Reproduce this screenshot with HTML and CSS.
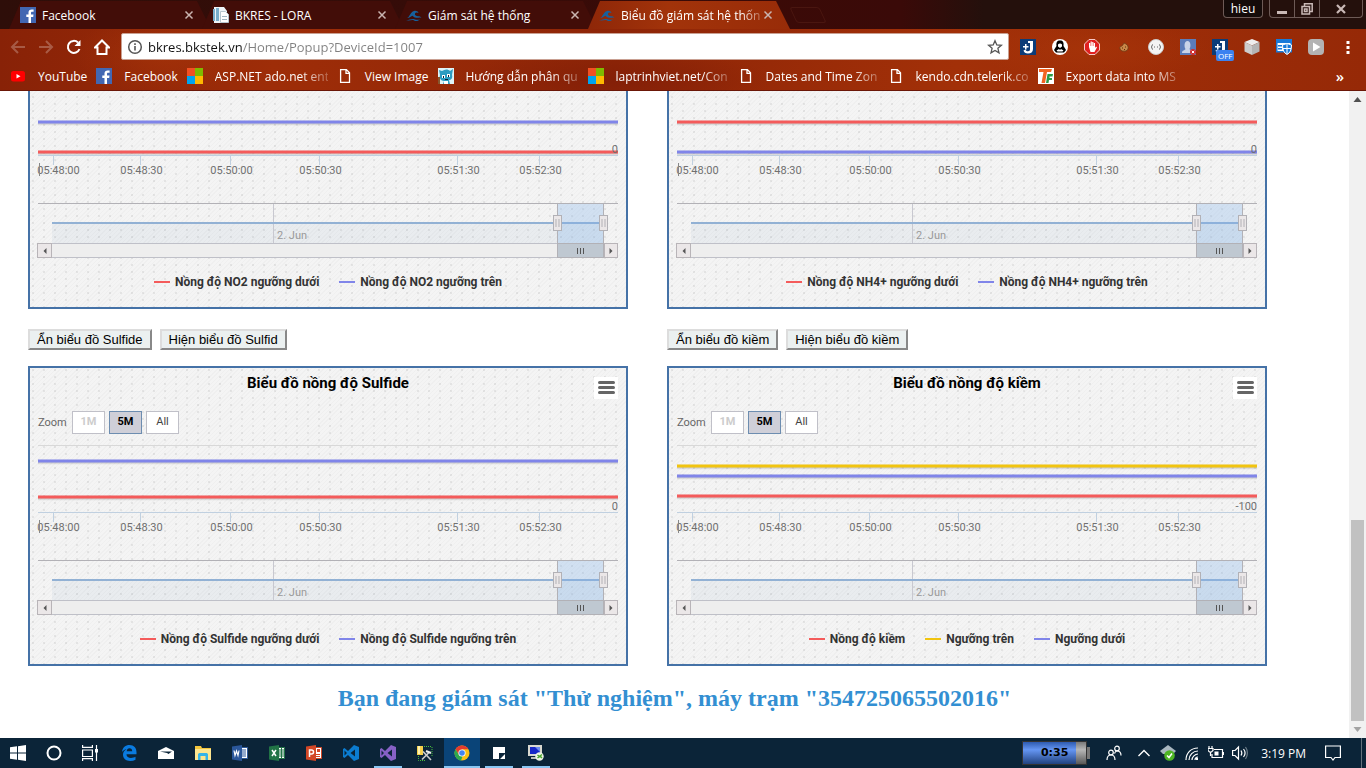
FILE: index.html
```html
<!DOCTYPE html>
<html lang="vi">
<head>
<meta charset="utf-8">
<title>Biểu đồ giám sát hệ thống</title>
<link rel="stylesheet" href="styles.css">
</head>
<body>
<svg class="defs" aria-hidden="true">
  <symbol id="i-fb" viewBox="0 0 16 16"><path fill="#4267b2" d="M0 0h16v16H0z"/><path fill="#fff" d="M11 16V10h2.200l.3-2.400H11V6c0-.8.300-1.200 1.200-1.200h1.400V2.500c-.4-.1-1.100-.1-1.900-.1-2 0-3.200 1.200-3.200 3.200v2H6.300V10h2.200v6z"/></symbol>
  <symbol id="i-wave" viewBox="0 0 16 16"><path fill="#17609c" d="M1 11c3-1 3-6 7-7 2-.5 4 .3 4.500 2-1.500-1-3-.7-3.500.5-.6 1.700 1.500 2.700 3 2.800 1.500.1 2.500.4 3.500 1.400-2-.6-3-.1-4.500.1C8 11.200 7.500 9 6.500 8.700 5 9 4 11 1 11zM0 13c3 .3 6-2 9-.6 2 .7 3.500.6 5-.2-1.500 1.800-4 2.200-6 1.200-2-1-5 .8-8-.4z"/></symbol>
  <symbol id="i-ms" viewBox="0 0 16 16"><path fill="#f25022" d="M0 0h8v8H0z"/><path fill="#7fba00" d="M8 0h8v8H8z"/><path fill="#00a4ef" d="M0 8h8v8H0z"/><path fill="#ffb900" d="M8 8h8v8H8z"/></symbol>
  <symbol id="i-doc" viewBox="0 0 16 16"><path fill="none" stroke="#fff" stroke-width="1.300" d="M3.600 1.600h5.800l3.100 3.200v9.600H3.600zM9 1.800V5.400h3.400"/></symbol>
  <symbol id="i-x" viewBox="0 0 10 10"><path stroke="#c9b4b0" stroke-width="1.500" d="M1.500 1.500l7 7M8.500 1.500l-7 7"/></symbol>
  <symbol id="i-j" viewBox="0 0 16 16"><path fill="#0c3c78" d="M0 0h16v16H0z"/><path fill="#fff" d="M8 2h5v8c0 3-2 4.500-5 4.500-2.500 0-4-1-4.500-3l2-1C6 12 7 12.300 8 12.300c1.500 0 2-.8 2-2V4H8z"/><path fill="#fff" d="M3 7h2V5h1.500v2h2v1.500h-2v2H5v-2H3z"/></symbol>
  <symbol id="i-burger" viewBox="0 0 24 22"><path stroke="#666" stroke-width="3" stroke-linecap="round" d="M5.500 5.500h14M5.500 10.500h14M5.500 15.500h14"/></symbol>
</svg>

<header class="browser">
  <div class="titlebar">
    <nav class="tabs" aria-label="Tabs">
      <a class="tab" href="#"><svg class="ico"><use href="#i-fb"/></svg><span class="tab-text">Facebook</span><svg class="close"><use href="#i-x"/></svg></a>
      <a class="tab" href="#"><svg class="ico" viewBox="0 0 16 16"><path fill="#eef4f8" d="M1 0h10l3 4v12H1z"/><path fill="#79aecb" d="M0 2h2v12H0zM3 1h3v13H3z"/><path fill="#fff" stroke="#b8c6cf" d="M7.500 4.500h5l3 3v8h-8z"/><path stroke="#9fb4c0" d="M9 9.500h5M9 12.500h5"/></svg><span class="tab-text">BKRES - LORA</span><svg class="close"><use href="#i-x"/></svg></a>
      <a class="tab" href="#"><svg class="ico"><use href="#i-wave"/></svg><span class="tab-text">Giám sát hệ thống</span><svg class="close"><use href="#i-x"/></svg></a>
      <a class="tab active" href="#"><svg class="ico"><use href="#i-wave"/></svg><span class="tab-text fade">Biểu đồ giám sát hệ thốn</span><svg class="close"><use href="#i-x"/></svg></a>
    </nav>
    <button class="newtab" aria-label="New tab"></button>
    <div class="win">
      <button class="user">hieu</button>
      <div class="winbtns">
        <button class="wb" aria-label="Minimize"><svg width="12" height="12"><path fill="#c9b9b6" d="M1 8h10v3H1z"/></svg></button>
        <button class="wb" aria-label="Restore"><svg width="12" height="12"><path fill="none" stroke="#c9b9b6" stroke-width="1.500" d="M3.500 3V.8h7.700v7.700H9M1 3.500h7.500V11H1zM3.500 6h2.500v2.500H3.500z"/></svg></button>
        <button class="wb wide" aria-label="Close"><svg width="12" height="12"><path stroke="#c9b9b6" stroke-width="2.200" d="M2 2l8 8M10 2l-8 8"/></svg></button>
      </div>
    </div>
  </div>
  <div class="toolbar">
    <button class="nav dim" aria-label="Back"><svg viewBox="0 0 16 16"><path d="M15 8H2M8 2L2 8l6 6"/></svg></button>
    <button class="nav dim" aria-label="Forward"><svg viewBox="0 0 16 16"><path d="M1 8h13M8 2l6 6-6 6"/></svg></button>
    <button class="nav" aria-label="Reload"><svg viewBox="0 0 16 16"><path d="M13.500 10A6 6 0 1 1 12 3.500"/><path class="solid" d="M14.500 1v6h-6z"/></svg></button>
    <button class="nav" aria-label="Home"><svg viewBox="0 0 16 16"><path d="M1 8.500L8 1.500l7 7h-2.500V15h-9V8.500z"/></svg></button>
    <div class="omnibox">
      <svg class="ico" viewBox="0 0 16 16"><circle cx="8" cy="8" r="6.300" fill="none" stroke="#555" stroke-width="1.500"/><path fill="#555" d="M7.200 7h1.600v4.500H7.200zM7.200 4.300h1.600v1.600H7.200z"/></svg>
      <input class="url" aria-label="Address" value="bkres.bkstek.vn/Home/Popup?DeviceId=1007">
      <svg class="ico" viewBox="0 0 16 16"><path fill="none" stroke="#555" stroke-width="1.300" d="M8 1.700l1.800 4.200 4.600.4-3.500 3 1.100 4.500L8 11.400l-4 2.400 1.100-4.500-3.500-3 4.600-.4z"/></svg>
    </div>
    <div class="exts">
      <button class="ext" aria-label="J"><svg><use href="#i-j"/></svg></button>
      <button class="ext" aria-label="Profile"><svg viewBox="0 0 16 16"><circle cx="8" cy="8" r="8" fill="#fff"/><path d="M8 1.500c3 0 4 2 3.500 5.500l2.500 4-2 2.500H4L2 11l2.500-4C4 3.500 5 1.500 8 1.500z"/><path fill="#fff" d="M6 5.500c1-1.500 3-1.500 4 0v2L8 9 6 7.500zM4.500 11.500L7 10l1 1 1-1 2.500 1.500-1 1h-5z"/></svg></button>
      <button class="ext" aria-label="AdBlock"><svg viewBox="0 0 16 16"><path fill="#e02020" stroke="#f6c9c9" d="M5 .500h6L15.500 5v6L11 15.500H5L.5 11V5z"/><path fill="#fff" d="M5 8V4h1.200v3h.4V2.600h1.200V7h.4V3h1.200v4h.4V4H11v5l1-1.400 1 .7L10.500 13H6.500z"/></svg></button>
      <button class="ext" aria-label="Cookie"><svg viewBox="0 0 16 16"><path fill="#c98748" stroke="#6c3b18" stroke-width=".8" d="M8 4c2 1 4.200 2 4.200 4.500a4.200 3.700 0 0 1-8.400 0c0-1 1-1 2-1.500s1.200-1.500 2.200-3z"/><path stroke="#5a2c0c" d="M6 9h1M9 8h1M8 10.500h1"/></svg></button>
      <button class="ext" aria-label="JSON"><svg viewBox="0 0 16 16"><circle cx="8" cy="8" r="7.500" fill="#f4f4f4" stroke="#ccc"/><path fill="none" stroke="#666" d="M5 5.500c-1.500 0-.5 2.500-2 2.500 1.500 0 .5 2.500 2 2.500M11 5.500c1.500 0 .5 2.500 2 2.500-1.500 0-.5 2.500-2 2.500M6 8h1M9 8h1"/></svg></button>
      <button class="ext" aria-label="Friends"><svg viewBox="0 0 16 16"><path fill="#5b7cba" d="M0 0h16v16H0z"/><path fill="#c9d3e8" d="M2 14c0-3 3-2.500 3.500-4C4 8 4 2 7.500 2S11 8 9.500 10c.5 1.500 3.500 1 3.500 4z"/><circle cx="13" cy="13" r="3" fill="#d22b2b"/><path stroke="#fff" d="M11.800 11.800l2.400 2.400M14.200 11.800l-2.400 2.400"/></svg></button>
      <button class="ext" aria-label="J off"><svg><use href="#i-j"/></svg><span class="badge">OFF</span></button>
      <button class="ext" aria-label="Cube"><svg viewBox="0 0 16 16"><path fill="#eee" d="M8 0l7.500 3L8 6.500.5 3z"/><path fill="#ccc" d="M.5 3L8 6.500V16L.5 12.500z"/><path fill="#b4b4b4" d="M15.500 3L8 6.500V16l7.500-3.500z"/></svg></button>
      <button class="ext" aria-label="Shield"><svg viewBox="0 0 16 16"><path fill="#fff" stroke="#1a7ad9" stroke-width="1.500" d="M.8.8h14.400v12H.8z"/><path fill="#1a7ad9" d="M0 0h16v4H0zM2 6h5v1.500H2zM2 9h4v1.500H2z"/><path fill="#1a7ad9" stroke="#fff" d="M11 4.500l4.500 1.500c0 5-1.500 8-4.500 9.500-3-1.500-4.500-4.500-4.500-9.500z"/><path stroke="#fff" d="M11 5v10M7 9.500h8"/></svg></button>
      <button class="ext" aria-label="Play"><svg viewBox="0 0 16 16"><rect width="16" height="16" rx="4" fill="#b3b3b3"/><path fill="#fff" d="M5 3.500l7.500 4.500L5 12.500z"/></svg></button>
    </div>
    <button class="menu3" aria-label="Menu"><svg width="4" height="14"><path fill="#fff" d="M.5 1h3v3h-3zM.5 6h3v3h-3zM.5 11h3v3h-3z"/></svg></button>
  </div>
  <nav class="bookmarks" aria-label="Bookmarks">
    <a class="bm" href="#"><svg class="ico" viewBox="0 0 16 16"><rect x="1" y="3" width="14" height="10.500" rx="2.500" fill="#f00"/><path fill="#fff" d="M6.500 6v4.500l4-2.200z"/></svg><span>YouTube</span></a>
    <a class="bm" href="#"><svg class="ico"><use href="#i-fb"/></svg><span>Facebook</span></a>
    <a class="bm" href="#"><svg class="ico"><use href="#i-ms"/></svg><span class="long">ASP.NET ado.net ent</span></a>
    <a class="bm" href="#"><svg class="ico"><use href="#i-doc"/></svg><span>View Image</span></a>
    <a class="bm" href="#"><svg class="ico" viewBox="0 0 16 16"><path fill="#dff3f7" d="M0 0h16v16H0z"/><path fill="#2e9cc0" d="M1 2l3 1c3-2 6-2 8 0l3-2-1 6c1 3-1 5-3 5l1 4H5l1-3C3 13 1 10 2 7z"/><path fill="#fff" d="M4 7h3v3H4zM9 6h3v3H9zM6 13h4v3H6z"/><path fill="#123" d="M5 8h1v2H5zM10 7h1v2h-1zM7 11h3v1H7z"/><path fill="#86572f" d="M0 9h2v7H0z"/></svg><span class="long">Hướng dẫn phân qu</span></a>
    <a class="bm" href="#"><svg class="ico"><use href="#i-ms"/></svg><span class="long">laptrinhviet.net/Con</span></a>
    <a class="bm" href="#"><svg class="ico"><use href="#i-doc"/></svg><span class="long">Dates and Time Zon</span></a>
    <a class="bm" href="#"><svg class="ico"><use href="#i-doc"/></svg><span class="long">kendo.cdn.telerik.co</span></a>
    <a class="bm" href="#"><svg class="ico" viewBox="0 0 16 16"><path fill="#fff" d="M0 0h16v16H0z"/><path fill="#f26522" d="M1 1h13l-1 3H9L7 15H3.500l2-11H1z"/><path fill="#2b9b46" d="M9.500 6H15l-.5 2.500H11.500V10h2.500v2h-3l-.5 3H8z"/></svg><span class="long">Export data into MS</span></a>
    <button class="more" aria-label="More bookmarks">»</button>
  </nav>
</header>

<div class="viewport">
  <main class="page">
    <div class="grid">
      <section class="chart" data-chart="no2"></section>
      <section class="chart" data-chart="nh4"></section>
      <div class="actions"><button>Ẩn biểu đồ Sulfide</button><button>Hiện biểu đồ Sulfid</button></div>
      <div class="actions"><button>Ẩn biểu đồ kiềm</button><button>Hiện biểu đồ kiềm</button></div>
      <section class="chart" data-chart="sulfide"></section>
      <section class="chart" data-chart="alkali"></section>
    </div>
    <h1 class="station">Bạn đang giám sát "Thử nghiệm", máy trạm "354725065502016"</h1>
  </main>
  <div class="scroll" aria-hidden="true">
    <svg viewBox="0 0 17 17"><path fill="#505050" d="M8.500 6l4 5h-8z"/></svg>
    <i></i>
    <i class="thumb"></i>
    <svg viewBox="0 0 17 17"><path fill="#a3a3a3" d="M8.500 11l4-5h-8z"/></svg>
  </div>
</div>

<footer class="taskbar">
  <div class="apps">
    <button class="app" aria-label="Start"><svg viewBox="0 0 16 16"><path fill="#fff" d="M0 2.300L7 1.300v6.300H0zM8 1.200L16 0v7.600H8zM0 8.400h7v6.400l-7-1zM8 8.400h8V16l-8-1.200z"/></svg></button>
    <button class="app" aria-label="Cortana"><svg viewBox="0 0 16 16"><circle cx="8" cy="8" r="6.500" fill="none" stroke="#fff" stroke-width="2"/></svg></button>
    <button class="app last" aria-label="Task view"><svg viewBox="0 0 16 16"><path fill="none" stroke="#fff" stroke-width="1.200" d="M.6 0v2.400h9.800V0M.6 5h9.800v6.500H.6zM.6 16v-2.300h9.800V16M14.500 0v16"/><path fill="#fff" d="M13 4h3v3.500h-3z"/></svg></button>
    <button class="app" aria-label="Edge"><svg viewBox="0 0 16 16"><path fill="#0a7be0" d="M1 7C1.500 2.500 4.500 0 8.500 0 13 0 15.500 3 15.500 7.200v2H5.500c0 2.500 2 3.800 4.500 3.800 1.800 0 3.300-.5 4.500-1.200v3c-1.500.8-3.200 1.200-5.200 1.200C4.800 16 2 13.500 2 9.800c0-2.500 1.300-4.500 3.500-5.600C3.500 4.500 2 5.500 1 7zm4.700-.7h5.500C11.200 4.500 10.300 3.300 8.500 3.300S6 4.500 5.700 6.300z"/></svg></button>
    <button class="app" aria-label="Mail"><svg viewBox="0 0 16 16"><path fill="#fff" d="M0 6l8-4 8 4v8H0z"/><path fill="#0b2438" d="M2 6.500h12L10.500 9 9 8z"/></svg></button>
    <button class="app" aria-label="Explorer"><svg viewBox="0 0 16 16"><path fill="#f4c63d" d="M0 1h6l1 2h9v11H0z"/><path fill="#fde58f" d="M0 4h16v11H0z"/><path fill="#35b4e8" d="M3 15V9.500C3 8.500 4 8 5 8h6c1 0 2 .5 2 1.500V15h-2.500v-4h-5v4z"/></svg></button>
    <button class="app" aria-label="Word"><svg viewBox="0 0 16 16"><path fill="#fff" stroke="#2b579a" d="M8 2.500h7.500v11H8z"/><path stroke="#2b579a" d="M10 5h4M10 7h4M10 9h4M10 11h4"/><path fill="#2b579a" d="M0 1.500L10 0v16L0 14.500z"/><path fill="none" stroke="#fff" stroke-width="1.200" d="M2 5.500l1 5 1.500-4.500L6 10.500l1-5"/></svg></button>
    <button class="app" aria-label="Excel"><svg viewBox="0 0 16 16"><path fill="#fff" stroke="#217346" d="M8 2.500h7.500v11H8z"/><path stroke="#217346" d="M10 5h5M10 7h5M10 9h5M10 11h5M12.500 3v10"/><path fill="#217346" d="M0 1.500L10 0v16L0 14.500z"/><path stroke="#fff" stroke-width="1.500" d="M3 5l4 6M7 5l-4 6"/></svg></button>
    <button class="app" aria-label="PowerPoint"><svg viewBox="0 0 16 16"><path fill="#fff" stroke="#d24726" d="M8 2.500h7.500v11H8z"/><path fill="#d24726" d="M11 4h3v3h-3zM10 9h4v1h-4zM10 11h4v1h-4z"/><path fill="#d24726" d="M0 1.500L10 0v16L0 14.500z"/><path fill="none" stroke="#fff" stroke-width="1.500" d="M3.500 12V5H5.500a2 2 0 0 1 0 4H3.500"/></svg></button>
    <button class="app" aria-label="VS Code"><svg viewBox="0 0 16 16"><path fill="#0b7cd0" d="M11 0l5 2v12l-5 2-6-6-3.500 3L0 12V4l1.500-1L5 6zM12 4.500L7.500 8l4.500 3.500zM1.500 5.500v5L4 8z" fill-rule="evenodd"/></svg></button>
    <button class="app open" aria-label="Visual Studio"><svg viewBox="0 0 16 16"><path fill="#8661c5" d="M11 0l5 2v12l-5 2-6-6-3.500 3L0 12V4l1.500-1L5 6zM12 4.500L7.500 8l4.500 3.500zM1.500 5.500v5L4 8z" fill-rule="evenodd"/></svg></button>
    <button class="app" aria-label="SQL Server"><svg viewBox="0 0 16 16"><path fill="#f5cf4c" d="M0 1h6v9H0z"/><path fill="#fff3b0" d="M1 1h2v8H1z"/><path fill="none" stroke="#49b93c" stroke-dasharray="1 1" d="M7 1.500h8M15 2v10M1.500 11v4.500H8"/><path stroke="#ccc" stroke-width="1.600" d="M5 14.500l7-7M6 6.500l8 8.500"/><path stroke="#eee" stroke-width="2" d="M9 6l5 2"/></svg></button>
    <button class="app open current" aria-label="Chrome"><svg viewBox="0 0 16 16"><circle cx="8" cy="8" r="7.500" fill="#fbc116"/><path fill="#e33b2e" d="M1.500 4.300A7.500 7.500 0 0 1 14.500 4.300H8L5 10z"/><path fill="#2da94f" d="M1.500 4.300L5 10l3.500 1.500-1.500 4A7.500 7.500 0 0 1 1.500 4.300z"/><circle cx="8" cy="8" r="3.600" fill="#fff"/><circle cx="8" cy="8" r="2.800" fill="#4285f4"/></svg></button>
    <button class="app open" aria-label="Notes"><svg viewBox="0 0 16 16"><path fill="#fff" d="M2 2h12v6H8v6H2zM14 9v5H9z"/></svg></button>
    <button class="app open" aria-label="Remote"><svg viewBox="0 0 16 16"><path fill="#d8d8d0" d="M0 0h14v11H0z"/><path fill="#1727c8" d="M2 2h10v7H2z"/><path fill="#6b8df0" d="M7 2h5v5z"/><path fill="#bbb" d="M3 12h7v2H3z"/><circle cx="11.500" cy="11.500" r="4.200" fill="#eef4e6"/><path stroke="#4ba82e" stroke-width="1.500" fill="none" d="M9.500 10l2 1.500-2 1.500M14 9.500L12 11l2 2"/></svg></button>
  </div>
  <div class="tray">
    <div class="power"><span>0:35</span></div>
    <svg class="people" viewBox="0 0 16 16"><g fill="none" stroke="#fff" stroke-width="1.200"><circle cx="5" cy="7.500" r="2.300"/><path d="M1 15c0-3 1.500-5 4-5s4 2 4 5"/><circle cx="11" cy="3.500" r="2.300"/><path d="M8.500 8.500c.5-1.500 1.300-2.500 2.500-2.500 2.500 0 4 2 4 4.500"/></g></svg>
    <svg class="t" viewBox="0 0 16 16"><path fill="none" stroke="#fff" stroke-width="1.400" d="M2.500 11L8 5.500l5.500 5.500"/></svg>
    <svg class="t" viewBox="0 0 16 16"><path fill="#a9b7c0" d="M8 0l8 6-3 3H3L0 6z"/><circle cx="9.500" cy="10.500" r="5.300" fill="#4db523"/><path fill="none" stroke="#fff" stroke-width="1.500" d="M7 10.500l2 2 3-4"/></svg>
    <svg class="t" viewBox="0 0 16 16"><g fill="none" stroke="#fff" stroke-width="1.200"><path d="M2 15C2 8 7 3 14 3M5 15c0-5 4-9 9-9M8 15c0-3 3-6 6-6M11 15c0-2 1-3 3-3"/></g><path fill="#fff" d="M12 13h2v2h-2z"/></svg>
    <svg class="t" viewBox="0 0 16 16"><path fill="none" stroke="#fff" stroke-width="1.200" d="M6 4.500h8.500v8H4V9M1 1v2M4 1v2M0 3.500h5v2L3.500 7h-2L0 5.500zM2.500 7v4"/><path fill="#fff" d="M6.500 6.500h4v4h-4zM15 7h1v3h-1z"/></svg>
    <svg class="t" viewBox="0 0 16 16"><g fill="none" stroke="#fff" stroke-width="1.200"><path d="M.6 5.500h2.500L6.500 2v12L3 10.500H.6zM9 5.500c1 1.500 1 3.500 0 5M11.500 4c2 2.500 2 5.500 0 8"/><path stroke="#6f7f8a" d="M13.500 2c2.500 3.500 2.500 8.500 0 12"/></g></svg>
    <time class="clock">3:19 PM</time>
    <button class="notif" aria-label="Notifications"><svg viewBox="0 0 16 16"><path fill="none" stroke="#fff" stroke-width="1.200" d="M.6 1h14.800v11.500H10L8 15l-2-2.500H.6z"/></svg></button>
    <i class="peek"></i>
  </div>
</footer>
<script src="charts.js"></script>
</body>
</html>
```
FILE: styles.css
```css
* { box-sizing: border-box; }
body {
  margin: 0;
  height: 100vh;
  display: flex;
  flex-direction: column;
  overflow: hidden;
  background: #fff;
  font-family: "Open Sans", "Noto Sans", sans-serif;
  font-size: 12px;
}
button { font: inherit; color: inherit; padding: 0; border: 0; background: none; }
a { color: inherit; text-decoration: none; }
svg { display: block; flex: none; }
.defs { display: none; }
.ico { width: 16px; height: 16px; }

/* browser frame */
.browser {
  flex: none;
  color: #fff;
  border-bottom: 1px solid #6b1708;
  background:
    radial-gradient(ellipse 90px 40px at 12% 60%, #ab370a88, transparent),
    radial-gradient(ellipse 160px 30px at 45% 90%, #7d1c0799, transparent),
    radial-gradient(ellipse 120px 30px at 80% 55%, #ab370a88, transparent),
    linear-gradient(90deg, #882207, #9e2d08 20%, #8e2507 45%, #a23008 70%, #962907);
}
.titlebar {
  display: flex;
  align-items: flex-end;
  height: 29px;
  padding-left: 9px;
  background: linear-gradient(90deg, #2e0e09, #3b0a07 55%, #3a0a08 66%, #24100c 72%, #24100c);
}
.tabs { display: flex; }
.tab {
  display: flex;
  align-items: center;
  width: 202px;
  height: 28px;
  margin-right: -9px;
  padding: 0 17px 0 11px;
  background: #420d08;
  clip-path: polygon(0 100%, 12px 0, 188px 0, 100% 100%);
}
.tab.active { background: linear-gradient(90deg, #8e2708, #a2330a 40%, #982c08); }
.tab-text {
  flex: 1;
  margin: 0 2px 0 6px;
  white-space: nowrap;
}
.fade { -webkit-mask-image: linear-gradient(90deg, #000 85%, #0004); mask-image: linear-gradient(90deg, #000 85%, #0004); }
.close { width: 10px; height: 10px; }
.newtab {
  width: 30px;
  height: 16px;
  margin: 0 0 6px 12px;
  border: 1px solid #4a1610;
  border-radius: 3px;
  transform: skewX(25deg);
}
.win { display: flex; align-self: flex-start; margin-left: auto; padding-right: 3px; gap: 6px; }
.user, .winbtns { height: 18px; border: 1px solid #6d5a56; border-top: 0; border-radius: 0 0 4px 4px; }
.user { width: 40px; background: #150b09; line-height: 16px; }
.winbtns { display: flex; }
.wb { display: grid; place-items: center; width: 25px; border-right: 1px solid #6d5a56; }
.wb.wide { width: 42px; border: 0; }

.toolbar { display: flex; align-items: center; height: 35px; padding-left: 4px; }
.nav { display: grid; place-items: center; width: 28px; height: 28px; }
.nav svg { width: 16px; height: 16px; fill: none; stroke: #fff; stroke-width: 2; }
.nav .solid { fill: #fff; stroke: none; }
.dim { opacity: .25; }
.omnibox {
  flex: 1;
  display: flex;
  align-items: center;
  height: 27px;
  margin-left: 5px;
  padding: 0 5px;
  background: #fff;
  border: 1px solid #c9a092;
  border-radius: 2px;
}
.url {
  flex: 1;
  min-width: 0;
  height: 24px;
  margin-left: 5px;
  padding: 0;
  border: 0;
  outline: 0;
  font: 13px "Open Sans", sans-serif;
  color: transparent;
  background: linear-gradient(90deg, #111 94px, #808080 94px);
  -webkit-background-clip: text;
  background-clip: text;
}
.exts { display: flex; margin-left: 3px; }
.ext { position: relative; display: grid; place-items: center; width: 32px; height: 28px; }
.ext svg { width: 16px; height: 16px; }
.badge {
  position: absolute;
  left: 12px;
  bottom: 0;
  padding: 0 2px;
  background: #3b82f0;
  border-radius: 2px;
  font-size: 8px;
  line-height: 11px;
}
.menu3 { display: grid; place-items: center; width: 32px; height: 28px; margin-right: 2px; }

.bookmarks { display: flex; align-items: center; gap: 9px; height: 26px; padding: 0 22px 2px 10px; }
.bm { display: flex; align-items: center; gap: 12px; white-space: nowrap; }
.long {
  width: 113px;
  -webkit-mask-image: linear-gradient(90deg, #000 75%, #0004);
  mask-image: linear-gradient(90deg, #000 75%, #0004);
}
.more { margin-left: auto; font-size: 15px; font-weight: 600; line-height: 16px; }

/* page */
.viewport { flex: 1; min-height: 0; display: flex; }
.page {
  flex: 1;
  min-width: 0;
  display: flex;
  flex-direction: column;
  justify-content: flex-end;
  overflow: hidden;
}
.grid {
  flex: none;
  display: grid;
  grid-template-columns: 1fr 1fr;
  column-gap: 39px;
  padding: 0 82px 0 28px;
}
.actions { display: flex; gap: 8px; padding: 20px 0 16px; }
.actions button {
  height: 21px;
  padding: 0 7px;
  border: 2px solid #ddd;
  border-color: #ddd #888 #888 #ddd;
  background: #ebf0f0;
  color: #000;
  font: 13px "Liberation Sans", sans-serif;
}
.station {
  flex: none;
  margin: 0;
  padding: 16px 0 24px;
  color: #338fd2;
  font: bold 24px/32px "Liberation Serif", serif;
  text-align: center;
}
.scroll {
  display: grid;
  grid-template-rows: 17px 412fr 201fr 17px;
  width: 17px;
  background: #f1f1f1;
}
.thumb { margin: 0 2px; background: #c1c1c1; }

/* charts */
.chart {
  height: 300px;
  display: flex;
  flex-direction: column;
  justify-content: flex-end;
  padding: 0 8px;
  border: 2px solid #4572a7;
  font-family: Roboto, sans-serif;
  background:
    radial-gradient(circle at 3px 2px, #00000012 0 1px, #0000 1px) 0 0 / 11px 7px,
    repeating-linear-gradient(-45deg, #0000 0 2px, #00000005 2px 3px),
    #f4f4f4;
}
.chart-head { display: grid; grid-template-columns: 1fr auto 1fr; height: 43px; }
.chart-head h2 { grid-column: 2; margin: 0; font-size: 15px; line-height: 30px; color: #000; }
.burger { justify-self: end; width: 24px; height: 22px; margin-top: 9px; background: #fff; }
.burger svg { width: 24px; height: 22px; }
.zoom { display: flex; align-items: center; gap: 4px; height: 23px; color: #666; font-size: 11px; }
.zoom span { width: 30px; }
.zoom button {
  width: 33px;
  height: 23px;
  padding-bottom: 2px;
  border: 1px solid #c0c0c8;
  background: #fff;
  color: #444;
}
.zoom button:disabled { color: #ccc; font-weight: 700; }
.zoom .on { background: #cfcfd8; border-color: #6d8db0; color: #000; font-weight: 700; }
.plot { width: 100%; height: 182px; overflow: visible; font-size: 11px; fill: #707070; }
.plot .jun { fill: #999; }
.mid { text-anchor: middle; }
.end { text-anchor: end; }
.legend {
  height: 48px;
  display: flex;
  justify-content: center;
  align-items: center;
  gap: 20px;
  margin: 0;
  padding: 0 0 2px;
  list-style: none;
  color: #333;
  font-size: 12px;
  font-weight: 700;
  white-space: nowrap;
}
.legend li { display: flex; align-items: center; gap: 5px; }
.legend i { width: 16px; height: 2px; }

/* taskbar */
.taskbar {
  flex: none;
  display: flex;
  justify-content: space-between;
  height: 30px;
  background: #0b2438;
  color: #fff;
}
.apps { display: flex; }
.app { display: grid; place-items: center; width: 36px; height: 30px; margin-right: 1px; }
.app:nth-child(-n+2) { margin-right: 0; }
.app.last { margin-right: 3px; }
.app svg { width: 16px; height: 16px; }
.open { background: linear-gradient(#8ac6f2, #8ac6f2) center bottom / 28px 2px no-repeat; }
.current { background: linear-gradient(#8ac6f2, #8ac6f2) center bottom / 36px 2px no-repeat #0a4478; }
.tray { display: flex; align-items: center; gap: 8px; }
.t { width: 16px; height: 16px; }
.people { width: 16px; height: 16px; margin: 0 6px 0 11px; }
.power {
  position: relative;
  width: 65px;
  height: 24px;
  border: 1px solid #333;
  background:
    linear-gradient(#0004, #fff3 35%, #0007),
    linear-gradient(90deg, #3f7cf0 53px, #a5a5a5 53px);
  color: #000;
  font: bold 11px/22px "DejaVu Sans", sans-serif;
  text-align: center;
}
.power::after {
  content: "";
  position: absolute;
  left: 64px;
  top: 5px;
  width: 3px;
  height: 12px;
  background: #777;
}
.clock { margin: 0 11px 0 5px; white-space: nowrap; }
.notif svg { width: 16px; height: 16px; }
.peek { width: 5px; height: 30px; margin-left: 12px; border-left: 1px solid #63727d; }
```
FILE: charts.js
```js
const RED = '#f45b5b', BLUE = '#8085e9', YELLOW = '#f1c40f';
const charts = {
  no2: { min: '0',
    series: [['Nồng độ NO2 ngưỡng dưới', RED, 75], ['Nồng độ NO2 ngưỡng trên', BLUE, 45]] },
  nh4: { min: '0',
    series: [['Nồng độ NH4+ ngưỡng dưới', RED, 45], ['Nồng độ NH4+ ngưỡng trên', BLUE, 75]] },
  sulfide: { title: 'Biểu đồ nồng độ Sulfide', min: '0',
    series: [['Nồng độ Sulfide ngưỡng dưới', RED, 63], ['Nồng độ Sulfide ngưỡng trên', BLUE, 27]] },
  alkali: { title: 'Biểu đồ nồng độ kiềm', min: '-100',
    series: [['Nồng độ kiềm', RED, 62], ['Ngưỡng trên', YELLOW, 32], ['Ngưỡng dưới', BLUE, 42]] }
};
const ticks = [[15.5, '05:48:00'], [102.5, '05:48:30'], [192.5, '05:50:00'],
  [281.5, '05:50:30'], [419.5, '05:51:30'], [501.5, '05:52:30']];

const pct = x => (x / 580 * 100) + '%';
const hline = (x1, x2, y, color, w = 1, op = 1) =>
  `<line x1="${pct(x1)}" x2="${pct(x2)}" y1="${y}" y2="${y}" stroke="${color}" stroke-width="${w}" stroke-opacity="${op}"/>`;
const vline = (x, y1, y2, color) =>
  `<line x1="${pct(x)}" x2="${pct(x)}" y1="${y1}" y2="${y2}" stroke="${color}"/>`;
const at = (x, body) => `<svg x="${pct(x)}" overflow="visible">${body}</svg>`;

function plot(c) {
  const series = c.series.map(([, color, y]) =>
    hline(0, 580, y + 1, '#000', 5, .05) + hline(0, 580, y + 1, '#000', 3, .1) + hline(0, 580, y, color, 3)).join('');
  const axis = ticks.map(([x, t], i) =>
    vline(x, 79, 88, '#c0d0e0') +
    `<text class="mid" x="${pct(i ? x + 1 : 20.5)}" y="97">${t}</text>`).join('');
  const handle = '<rect x="-4" y="138.500" width="8" height="15" fill="#ebe7e8" stroke="#b2b1b6"/>' +
    '<path stroke="#b2b1b6" d="M-1.500 142v8M1.500 142v8"/>';
  return `<svg class="plot">
    ${hline(0, 580, 11.5, '#d8d8d8')}${series}
    ${hline(0, 580, 78.5, '#c0d0e0')}${axis}${vline(1.5, 86, 99, '#888')}
    <text class="end" x="100%" y="76">${c.min}</text>
    <rect x="${pct(14)}" y="146" width="${pct(551)}" height="20" fill="#4572a7" fill-opacity=".06"/>
    ${hline(0, 580, 126.5, '#b2b1b6')}${vline(235.5, 127, 166, '#c8c8d0')}
    ${at(239, '<text class="jun" y="162">2. Jun</text>')}
    ${hline(14, 565, 146, '#92b1d4', 2)}
    <rect x="${pct(519.5)}" y="127" width="${pct(46)}" height="40" fill="#80b3ea" fill-opacity=".3"/>
    ${vline(519.5, 127, 166, '#b2b1b6')}${vline(565.5, 127, 166, '#b2b1b6')}
    <rect x="${pct(-.5)}" y="166.500" width="${pct(580)}" height="14" fill="#eee" stroke="#bfc0c8"/>
    ${at(-.5, '<rect y="166.500" width="14" height="14" fill="#ebe7e8" stroke="#b8b4b8"/><path fill="#555" d="M9 171v6l-3-3z"/>')}
    ${at(566.5, '<rect y="166.500" width="13" height="14" fill="#ebe7e8" stroke="#b8b4b8"/><path fill="#555" d="M5 171v6l3-3z"/>')}
    <rect x="${pct(519.5)}" y="166.500" width="${pct(46)}" height="14" fill="#bfc8d1" stroke="#b2b1b6"/>
    ${at(542.5, '<path stroke="#555" d="M-3 171v6M0 171v6M3 171v6"/>')}
    ${at(519.5, handle)}${at(565.5, handle)}
  </svg>`;
}

const head = c => `
  <div class="chart-head"><h2>${c.title}</h2>
    <button class="burger" aria-label="Menu"><svg><use href="#i-burger"/></svg></button></div>
  <div class="zoom"><span>Zoom</span><button disabled>1M</button><button class="on">5M</button><button>All</button></div>`;

document.querySelectorAll('[data-chart]').forEach(el => {
  const c = charts[el.dataset.chart];
  el.innerHTML = `${c.title ? head(c) : ''}
    ${plot(c)}
    <ul class="legend">${c.series.map(([n, color]) => `<li><i style="background:${color}"></i>${n}</li>`).join('')}</ul>`;
});
```
